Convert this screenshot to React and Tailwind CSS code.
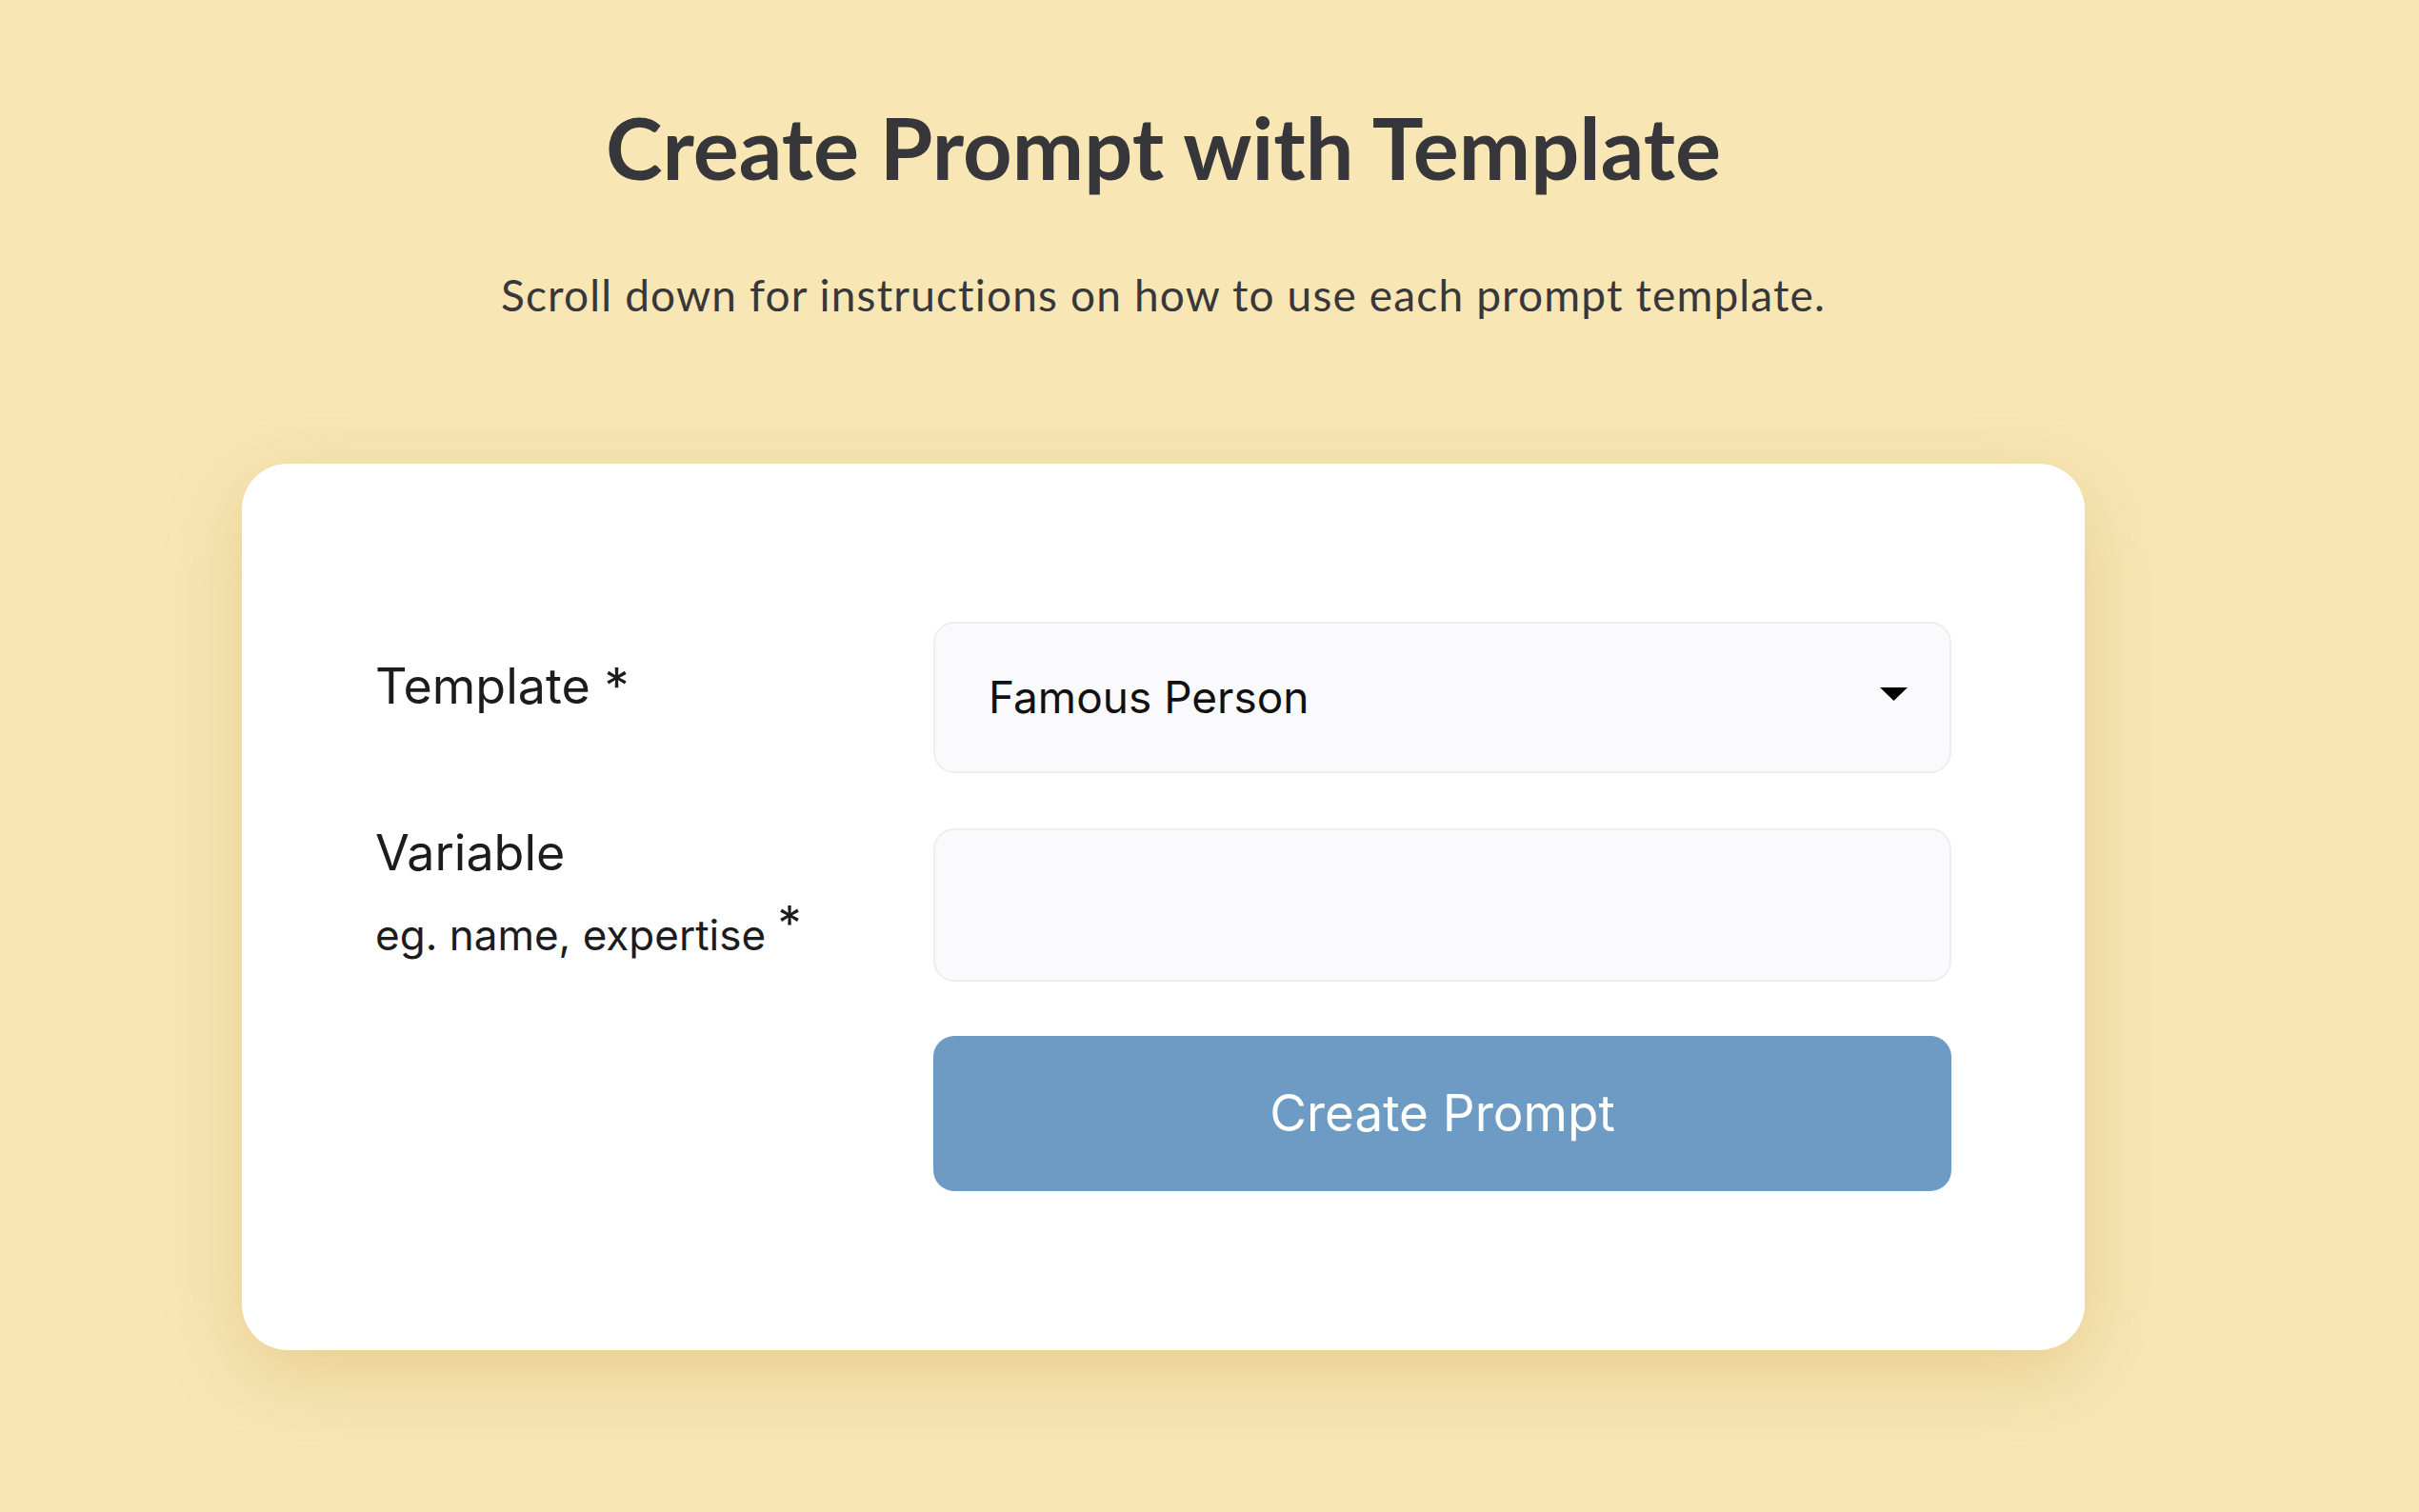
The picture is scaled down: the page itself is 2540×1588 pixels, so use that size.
export default function App() {
  return (
    <div className="min-h-screen w-full bg-[#f8e6b4] overflow-hidden">
      <div className="ml-[254px] w-[1935px] pt-[109px] pb-[160px]">
        {/* heading */}
        <h1 className="text-center text-[90px] leading-[90px] font-bold text-[#37373b] font-['Lato',sans-serif]">
          Create Prompt with Template
        </h1>
        <p className="mt-[88px] text-center text-[46px] leading-[46px] tracking-[1.15px] text-[#38383b] font-['Lato',sans-serif]">
          Scroll down for instructions on how to use each prompt template.
        </p>

        {/* form card */}
        <div className="mt-[154px] rounded-[48px] bg-white px-[140px] pt-[166px] pb-[167px] shadow-[0_24px_80px_rgba(196,156,70,0.32)] font-['Inter',sans-serif]">
          <div className="flex">
            <label className="w-[586px] shrink-0 pt-[42px] text-[52px] leading-none text-[#1c1c1e]">
              Template *
            </label>
            <div className="flex h-[159px] flex-1 items-center justify-between rounded-[22px] border-2 border-[#eeeef0] bg-[#fafafc] pl-[56px] pr-[44px]">
              <span className="-mt-[2px] text-[46px] leading-none text-[#111]">Famous Person</span>
              <svg width="29" height="14" viewBox="0 0 29 14" className="-mt-[8px]">
                <path d="M0 0 H29 L14.5 14 Z" fill="#000" />
              </svg>
            </div>
          </div>

          <div className="mt-[58px] flex">
            <div className="w-[586px] shrink-0 text-[#1c1c1e]">
              <div className="pt-[0px] text-[52px] leading-none">Variable</div>
              <div className="mt-[33px] text-[44px] leading-none">
                eg. name, expertise <span className="relative -top-[10px] text-[50px]">*</span>
              </div>
            </div>
            <div className="h-[161px] flex-1 rounded-[22px] border-2 border-[#eeeef0] bg-[#fafafc]" />
          </div>

          <div className="mt-[57px] flex">
            <div className="w-[586px] shrink-0" />
            <button className="flex h-[163px] flex-1 items-center justify-center rounded-[22px] bg-[#6d9bc3] text-[53px] leading-none text-white">
              Create Prompt
            </button>
          </div>
        </div>
      </div>
    </div>
  );
}
